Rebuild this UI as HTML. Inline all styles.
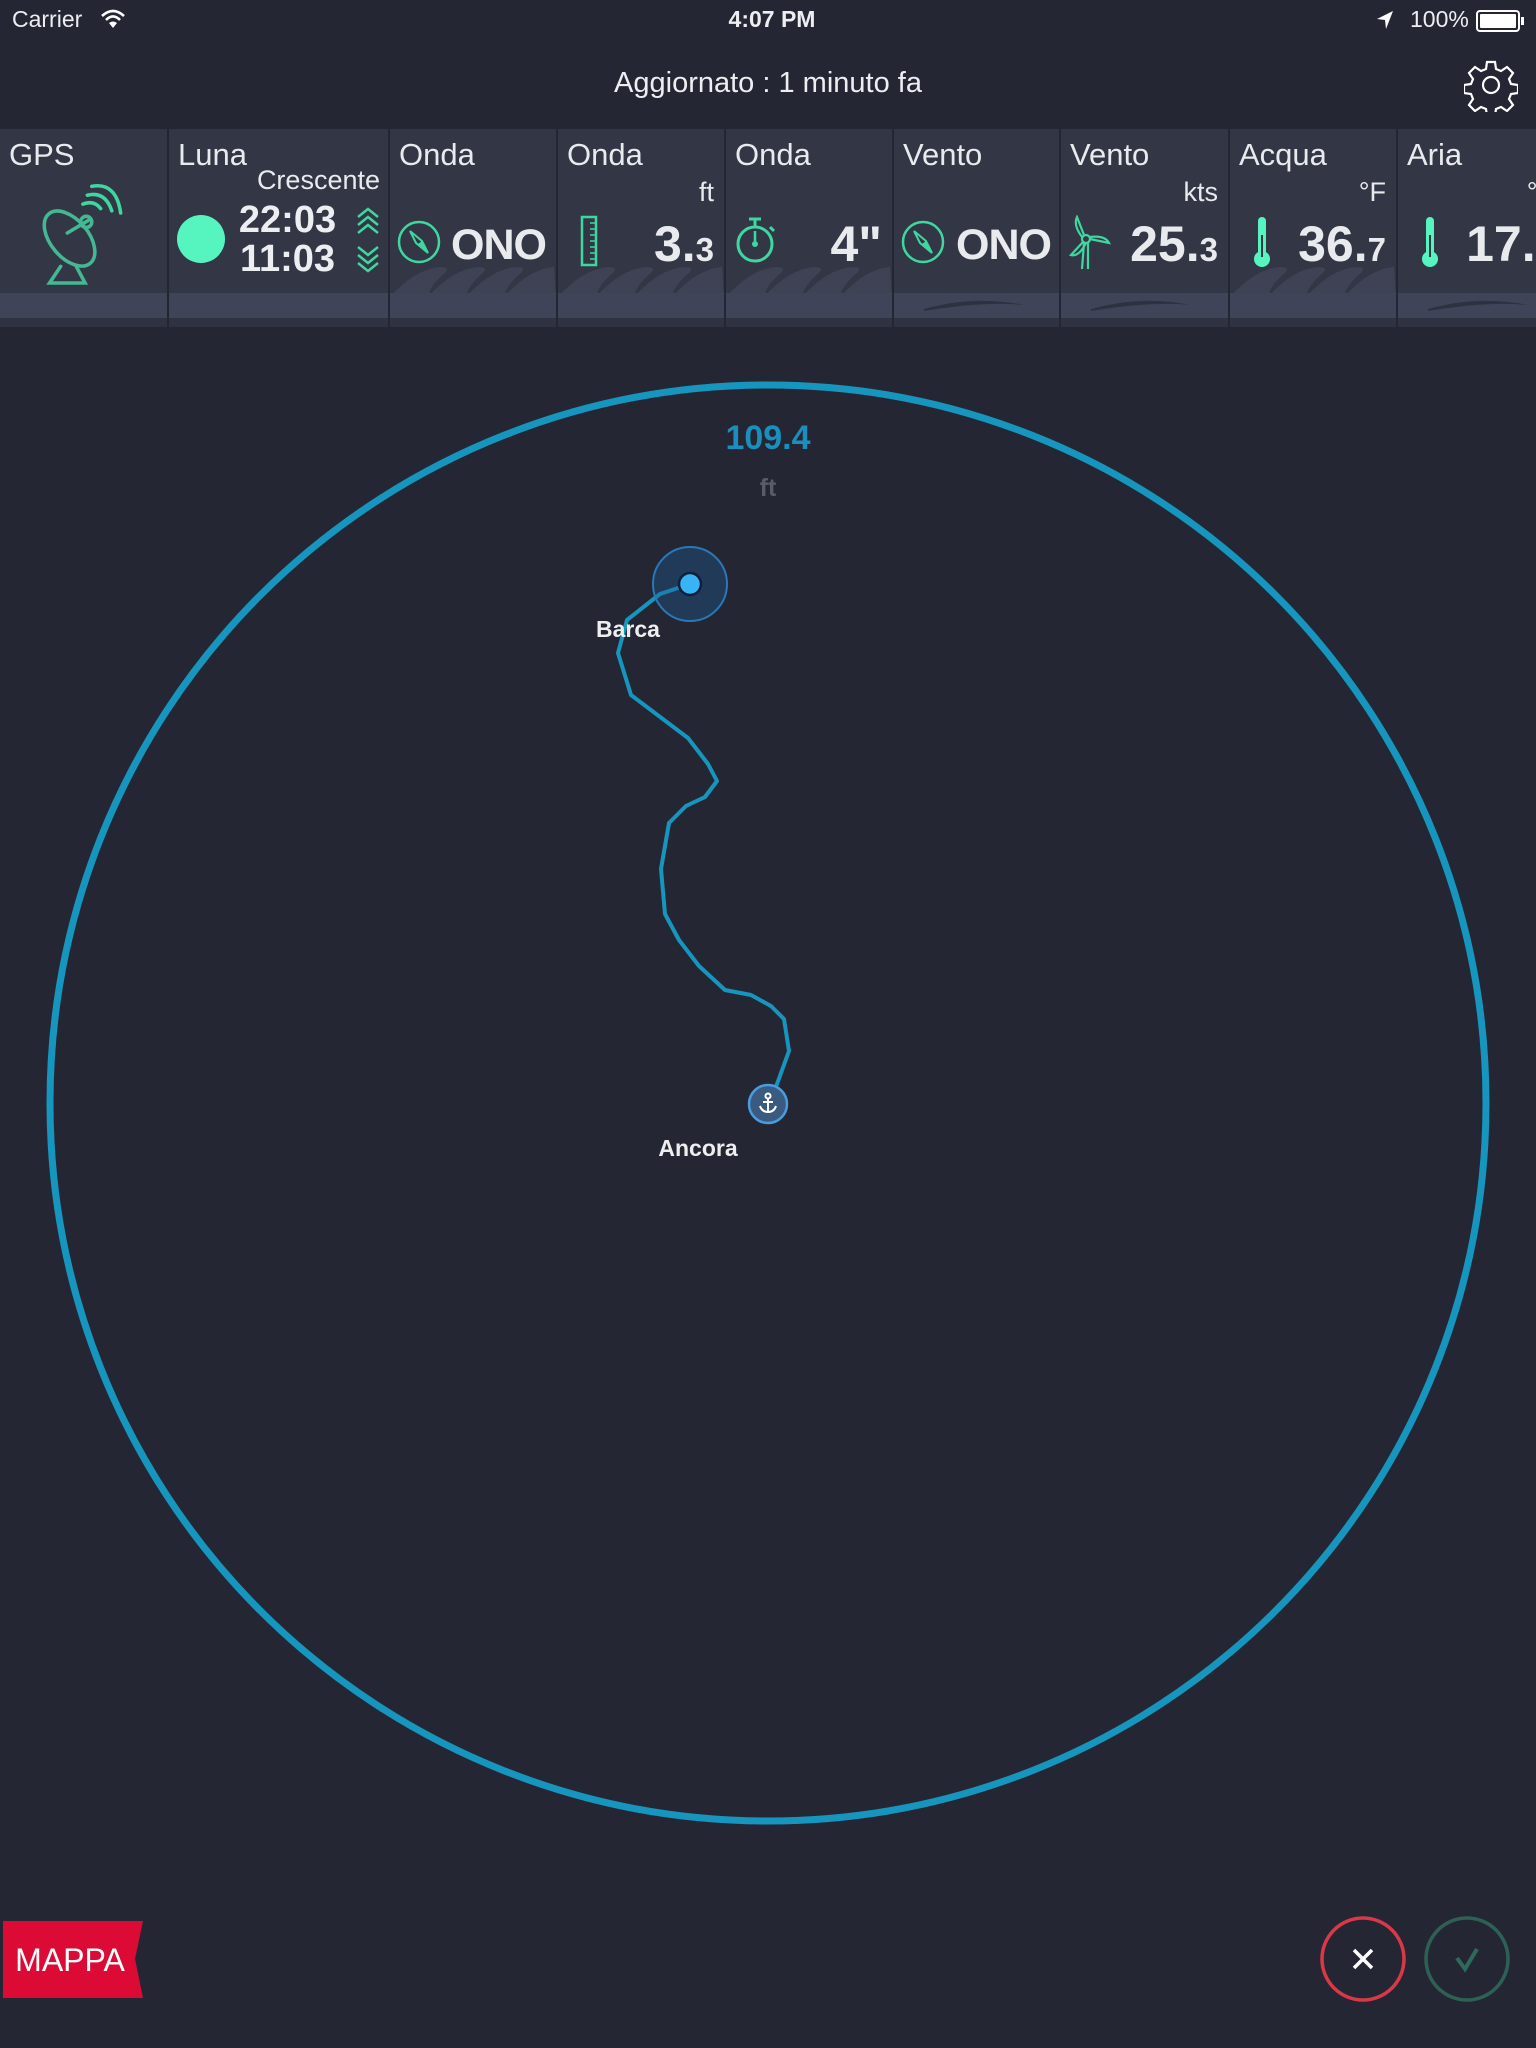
<!DOCTYPE html>
<html><head><meta charset="utf-8"><style>
*{margin:0;padding:0;box-sizing:border-box}
body{width:1536px;height:2048px;background:#242733;position:relative;overflow:hidden;font-family:"Liberation Sans",sans-serif;color:#eceef2}
.a{position:absolute}
.tile{position:absolute;top:129px;height:198px;background:#333645;overflow:hidden}
.tile .band{position:absolute;left:0;right:0;top:164px;height:25px;background:#404458}
.tile .bot{position:absolute;left:0;right:0;top:189px;height:9px;background:#2f3241}
.t{position:absolute;left:9px;top:8px;font-size:31px;color:#e8eaee}
.u{position:absolute;right:10px;top:48px;font-size:27px;color:#e8eaee}
.v{position:absolute;right:10px;top:86px;font-size:50px;font-weight:bold;color:#e8eaee;white-space:nowrap}
.v small{font-size:33px}
.ono{font-size:43px;top:92px;letter-spacing:-1px}
</style></head><body>
<div class="a" style="left:12px;top:6px;font-size:23px">Carrier</div>
<svg class="a" style="left:100px;top:8px" width="26" height="22" viewBox="0 0 26 22"><path d="M2 8 Q13 -2 24 8" stroke="#fff" stroke-width="2.6" fill="none"/><path d="M6 12 Q13 5 20 12" stroke="#fff" stroke-width="2.6" fill="none"/><path d="M13 20 L9 15 Q13 12 17 15Z" fill="#fff"/></svg>
<div class="a" style="left:0;width:1544px;text-align:center;top:6px;font-size:23px;font-weight:bold">4:07 PM</div>
<svg class="a" style="left:1376px;top:10px" width="18" height="20" viewBox="0 0 18 20"><path d="M17 1 L1 9 L9 10 L10 19Z" fill="#fff"/></svg>
<div class="a" style="left:1410px;top:6px;font-size:23px">100%</div>
<div class="a" style="left:1476px;top:10px;width:44px;height:22px;border:2px solid #fff;border-radius:4px;padding:2px"><div style="width:100%;height:100%;background:#fff;border-radius:1px"></div></div>
<div class="a" style="left:1521px;top:17px;width:3px;height:8px;background:#fff"></div>
<div class="a" style="left:0;width:1536px;text-align:center;top:67px;font-size:29px">Aggiornato : 1 minuto fa</div>
<svg class="a" style="left:1464px;top:58px" width="54" height="54" viewBox="0 0 54 54"><g fill="none" stroke="#fff" stroke-width="2.2"><path d="M23 4h8l1 7 5 2 6-4 6 6-4 6 2 5 7 1v8l-7 1-2 5 4 6-6 6-6-4-5 2-1 7h-8l-1-7-5-2-6 4-6-6 4-6-2-5-7-1v-8l7-1 2-5-4-6 6-6 6 4 5-2z"/><circle cx="27" cy="27" r="8"/></g></svg>

<div class="tile" style="left:0;width:167px"><div class="band"></div><div class="bot"></div><div class="t">GPS</div>
<svg class="a" style="left:34px;top:48px" width="100" height="112" viewBox="0 0 90 100"><g fill="none" stroke-width="3.2" stroke-linecap="round"><ellipse cx="32" cy="55" rx="17" ry="29" transform="rotate(-40 32 55)" stroke="#43b893"/><path d="M30 50 L50 38" stroke="#43b893"/><circle cx="47" cy="40" r="5" stroke="#43b893"/><path d="M24 80 L14 95 H46 L38 80" stroke="#43b893"/><g stroke="#3fd6a0"><path d="M44 24 Q54 20 60 28"/><path d="M48 16 Q64 12 70 30"/><path d="M52 8 Q74 4 78 32"/></g></g></svg></div>

<div class="tile" style="left:169px;width:219px"><div class="band"></div><div class="bot"></div><div class="t">Luna</div>
<div class="a" style="right:8px;top:36px;font-size:27px;color:#e8eaee">Crescente</div>
<div class="a" style="left:8px;top:86px;width:48px;height:48px;border-radius:50%;background:#56f5c0"></div>
<div class="a" style="left:66px;top:70px;font-size:38px;font-weight:bold;width:105px;text-align:center">22:03</div>
<div class="a" style="left:66px;top:109px;font-size:38px;font-weight:bold;width:105px;text-align:center">11:03</div>
<svg class="a" style="left:186px;top:76px" width="26" height="70" viewBox="0 0 26 70"><g fill="none" stroke="#3fd6a0" stroke-width="2.5"><path d="M3 12 L13 4 L23 12 M3 20 L13 12 L23 20 M3 28 L13 20 L23 28"/><path d="M3 42 L13 50 L23 42 M3 50 L13 58 L23 50 M3 58 L13 66 L23 58"/></g></svg></div>

<div class="tile" style="left:390px;width:166px"><svg class="a" style="left:0;top:134px" width="166" height="34" viewBox="0 0 166 34"><path d="M0 34 Q25 6 50 4 Q60 4 56 9 Q40 22 38 34Z M38 34 Q63 6 88 4 Q98 4 94 9 Q78 22 76 34Z M76 34 Q101 6 126 4 Q136 4 132 9 Q116 22 114 34Z M114 34 Q139 6 164 4 L166 34Z" fill="#3e4254"/></svg><div class="band"></div><div class="bot"></div><div class="t">Onda</div>
<svg class="a" style="left:6px;top:90px" width="46" height="46" viewBox="0 0 46 46"><circle cx="23" cy="23" r="20" fill="none" stroke="#3fd6a0" stroke-width="2.5"/><path d="M14 12 L26 22 L32 34 L20 24Z" fill="none" stroke="#3fd6a0" stroke-width="2"/><path d="M26 22 L32 34 L22 25Z" fill="#3fd6a0"/></svg>
<div class="v ono" style="right:10px">ONO</div></div>

<div class="tile" style="left:558px;width:166px"><svg class="a" style="left:0;top:134px" width="166" height="34" viewBox="0 0 166 34"><path d="M0 34 Q25 6 50 4 Q60 4 56 9 Q40 22 38 34Z M38 34 Q63 6 88 4 Q98 4 94 9 Q78 22 76 34Z M76 34 Q101 6 126 4 Q136 4 132 9 Q116 22 114 34Z M114 34 Q139 6 164 4 L166 34Z" fill="#3e4254"/></svg><div class="band"></div><div class="bot"></div><div class="t">Onda</div><div class="u">ft</div>
<svg class="a" style="left:22px;top:86px" width="18" height="52" viewBox="0 0 18 52"><rect x="2" y="2" width="14" height="48" fill="none" stroke="#3fd6a0" stroke-width="2.5"/><path d="M10 8h6M10 14h6M10 20h6M10 26h6M10 32h6M10 38h6M10 44h6" stroke="#3fd6a0" stroke-width="1.5"/></svg>
<div class="v">3.<small>3</small></div></div>

<div class="tile" style="left:726px;width:166px"><svg class="a" style="left:0;top:134px" width="166" height="34" viewBox="0 0 166 34"><path d="M0 34 Q25 6 50 4 Q60 4 56 9 Q40 22 38 34Z M38 34 Q63 6 88 4 Q98 4 94 9 Q78 22 76 34Z M76 34 Q101 6 126 4 Q136 4 132 9 Q116 22 114 34Z M114 34 Q139 6 164 4 L166 34Z" fill="#3e4254"/></svg><div class="band"></div><div class="bot"></div><div class="t">Onda</div>
<svg class="a" style="left:8px;top:86px" width="46" height="50" viewBox="0 0 46 50"><g fill="none" stroke="#3fd6a0" stroke-width="3"><circle cx="21" cy="29" r="17"/><path d="M15 4h12M21 4v8M36 12l4 4"/></g><circle cx="21" cy="29" r="3" fill="#3fd6a0"/><path d="M21 16v10" stroke="#3fd6a0" stroke-width="2.5"/></svg>
<div class="v">4"</div></div>

<div class="tile" style="left:894px;width:165px"><div class="band"></div><div class="bot"></div><svg class="a" style="left:30px;top:168px" width="110" height="16" viewBox="0 0 110 16"><path d="M0 12 Q50 -2 100 8 Q60 4 0 14Z" fill="#2e3140"/></svg><div class="t">Vento</div>
<svg class="a" style="left:6px;top:90px" width="46" height="46" viewBox="0 0 46 46"><circle cx="23" cy="23" r="20" fill="none" stroke="#3fd6a0" stroke-width="2.5"/><path d="M14 12 L26 22 L32 34 L20 24Z" fill="none" stroke="#3fd6a0" stroke-width="2"/><path d="M26 22 L32 34 L22 25Z" fill="#3fd6a0"/></svg>
<div class="v ono" style="right:8px">ONO</div></div>

<div class="tile" style="left:1061px;width:167px"><div class="band"></div><div class="bot"></div><svg class="a" style="left:30px;top:168px" width="110" height="16" viewBox="0 0 110 16"><path d="M0 12 Q50 -2 100 8 Q60 4 0 14Z" fill="#2e3140"/></svg><div class="t">Vento</div><div class="u">kts</div>
<svg class="a" style="left:8px;top:86px" width="46" height="56" viewBox="0 0 46 56"><g fill="none" stroke="#3fd6a0" stroke-width="2.2"><circle cx="17" cy="24" r="4"/><path d="M15 20 L8 2 Q4 10 13 22 M21 24 L40 28 Q36 20 21 22 M14 27 L2 40 Q10 42 17 28 M15 28 L13 54 M19 28 L19 54"/></g></svg>
<div class="v">25.<small>3</small></div></div>

<div class="tile" style="left:1230px;width:166px"><svg class="a" style="left:0;top:134px" width="166" height="34" viewBox="0 0 166 34"><path d="M0 34 Q25 6 50 4 Q60 4 56 9 Q40 22 38 34Z M38 34 Q63 6 88 4 Q98 4 94 9 Q78 22 76 34Z M76 34 Q101 6 126 4 Q136 4 132 9 Q116 22 114 34Z M114 34 Q139 6 164 4 L166 34Z" fill="#3e4254"/></svg><div class="band"></div><div class="bot"></div><div class="t">Acqua</div><div class="u">°F</div>
<svg class="a" style="left:20px;top:86px" width="24" height="54" viewBox="0 0 24 54"><rect x="8" y="2" width="8" height="38" rx="4" fill="#56f5c0"/><circle cx="12" cy="44" r="8" fill="#56f5c0"/><rect x="11" y="20" width="2" height="22" fill="#333645"/></svg>
<div class="v">36.<small>7</small></div></div>

<div class="tile" style="left:1398px;width:166px"><div class="band"></div><div class="bot"></div><svg class="a" style="left:30px;top:168px" width="110" height="16" viewBox="0 0 110 16"><path d="M0 12 Q50 -2 100 8 Q60 4 0 14Z" fill="#2e3140"/></svg><div class="t">Aria</div><div class="u">°F</div>
<svg class="a" style="left:20px;top:86px" width="24" height="54" viewBox="0 0 24 54"><rect x="8" y="2" width="8" height="38" rx="4" fill="#56f5c0"/><circle cx="12" cy="44" r="8" fill="#56f5c0"/><rect x="11" y="20" width="2" height="22" fill="#333645"/></svg>
<div class="v">17.<small>3</small></div></div>

<div class="a" style="left:167px;top:129px;width:2px;height:198px;background:#23262f"></div>

<svg class="a" style="left:0;top:0" width="1536" height="2048">
<circle cx="768" cy="1103" r="718" fill="none" stroke="#1696be" stroke-width="7"/>
<text x="768" y="449" text-anchor="middle" font-family="Liberation Sans" font-weight="bold" font-size="34" fill="#1a8fbd">109.4</text>
<text x="768" y="496" text-anchor="middle" font-family="Liberation Sans" font-weight="bold" font-size="25" fill="#595c66">ft</text>
<polyline fill="none" stroke="#1696be" stroke-width="4" stroke-linejoin="round" points="690,584 660,594 627,620 618,653 631,695 688,738 708,764 717,781 705,797 686,806 669,823 661,869 665,914 679,940 699,966 725,990 751,995 771,1006 784,1019 789,1051 777,1084 768,1104"/>
<circle cx="690" cy="584" r="37" fill="#1d5f9a" fill-opacity="0.35" stroke="#2a78b8" stroke-width="2"/>
<circle cx="690" cy="584" r="11" fill="#38b4f6" stroke="#10203a" stroke-width="2.5"/>
<text x="628" y="637" text-anchor="middle" font-family="Liberation Sans" font-weight="bold" font-size="23" fill="#eee">Barca</text>
<circle cx="768" cy="1104" r="19" fill="#3a5a80" stroke="#4a9be0" stroke-width="2.5"/>
<g stroke="#fff" stroke-width="2" fill="none"><circle cx="768" cy="1096" r="2.5"/><path d="M768 1099v13M763 1102h10M760 1106q2 6 8 6q6 0 8-6"/></g>
<text x="698" y="1156" text-anchor="middle" font-family="Liberation Sans" font-weight="bold" font-size="23" fill="#eee">Ancora</text>
<path d="M3 1921 H143 L135 1959 L143 1998 H3Z" fill="#dc0b36"/>
<text x="70" y="1971" text-anchor="middle" font-family="Liberation Sans" font-size="32" fill="#fff">MAPPA</text>
<circle cx="1363" cy="1959" r="41" fill="none" stroke="#d83848" stroke-width="3.5"/>
<path d="M1354 1950 L1372 1968 M1372 1950 L1354 1968" stroke="#fff" stroke-width="3.5"/>
<circle cx="1467" cy="1959" r="41" fill="none" stroke="#2e6055" stroke-width="3.5"/>
<path d="M1457 1958 L1465 1969 L1477 1949" fill="none" stroke="#2e6a5c" stroke-width="4"/>
</svg>
</body></html>
